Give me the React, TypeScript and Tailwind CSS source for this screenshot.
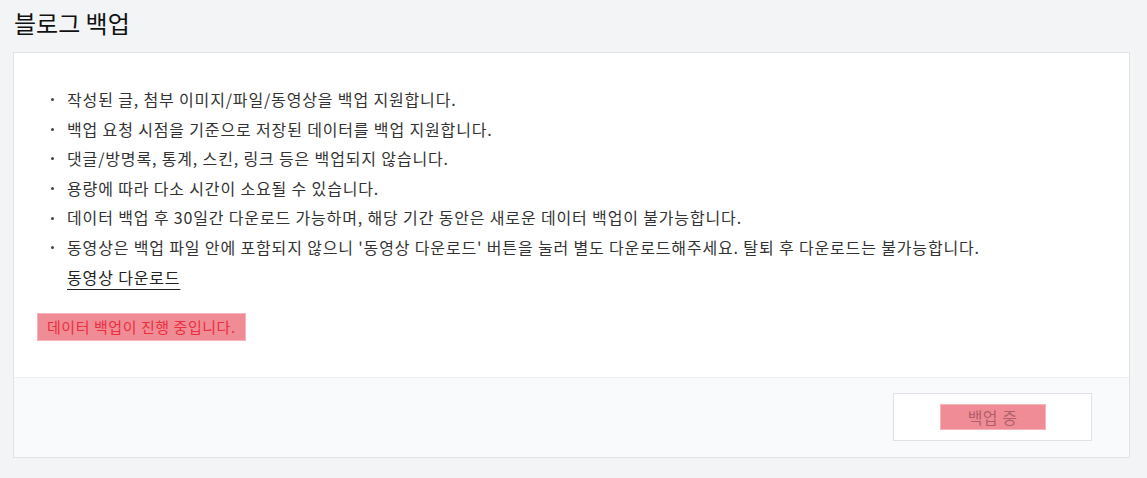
const items = [
  "작성된 글, 첨부 이미지/파일/동영상을 백업 지원합니다.",
  "백업 요청 시점을 기준으로 저장된 데이터를 백업 지원합니다.",
  "댓글/방명록, 통계, 스킨, 링크 등은 백업되지 않습니다.",
  "용량에 따라 다소 시간이 소요될 수 있습니다.",
  "데이터 백업 후 30일간 다운로드 가능하며, 해당 기간 동안은 새로운 데이터 백업이 불가능합니다.",
];

function Bullet() {
  return (
    <span className="flex h-[29.6px] w-[30px] shrink-0 items-center pl-[14px]">
      <span className="h-[3px] w-[3px] rounded-full bg-[#444]" />
    </span>
  );
}

export default function App() {
  return (
    <div
      className="min-h-[478px] bg-[#f3f4f6] pl-[13px] pr-[17px] pt-[5px] pb-[20px] text-[#333]"
      style={{ fontFamily: '"Noto Sans CJK KR", "Noto Sans", sans-serif' }}
    >
      <h1 className="pl-[1px] text-[24px] leading-[36px] text-[#111]">블로그 백업</h1>
      <div className="mt-[11px] border border-[#e1e3e8] bg-white">
        <div className="pl-[23px] pr-[20px] pt-[32px] pb-[36px]">
          <ul className="text-[16px] leading-[29.6px] tracking-[0.85px]">
            {items.map((t) => (
              <li key={t} className="flex">
                <Bullet />
                <span>{t}</span>
              </li>
            ))}
            <li className="flex">
              <Bullet />
              <div>
                <div>
                  동영상은 백업 파일 안에 포함되지 않으니 '동영상 다운로드' 버튼을 눌러 별도 다운로드해주세요. 탈퇴 후 다운로드는 불가능합니다.
                </div>
                <a className="underline underline-offset-[5px] text-[#222]">동영상 다운로드</a>
              </div>
            </li>
          </ul>
          <div className="mt-[21px] flex">
            <span className="border border-[#f4b4ba] bg-[#f08c96] px-[9px] text-[15px] leading-[26px] text-[#e8303e] tracking-[0.55px]">
              데이터 백업이 진행 중입니다.
            </span>
          </div>
        </div>
        <div className="flex justify-end border-t border-[#eceef1] bg-[#f9fafb] pr-[37px] pt-[15px] pb-[16px]">
          <div className="flex h-[48px] w-[199px] items-center justify-center border border-[#dfe1e6] bg-white">
            <span className="w-[106px] border border-[#f4b4ba] bg-[#f08c96] text-center text-[16px] leading-[24px] text-[#b0606a] tracking-[0.5px]">
              백업 중
            </span>
          </div>
        </div>
      </div>
    </div>
  );
}
